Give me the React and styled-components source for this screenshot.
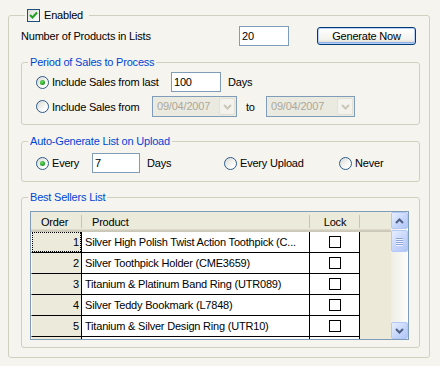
import React from 'react'
import styled, { createGlobalStyle } from 'styled-components'

const GlobalStyle = createGlobalStyle`
  html, body {
    margin: 0;
    padding: 0;
    background: #f5f4ef;
  }
  body {
    font: 11px 'Liberation Sans', Arial, sans-serif;
    letter-spacing: -0.2px;
    color: #000;
  }
  * { box-sizing: border-box; }
`

const Page = styled.div`
  width: 440px;
  height: 366px;
  padding: 8px 10px 0 8px;
  overflow: hidden;
`

const Group = styled.fieldset`
  margin: ${p => p.$mt || 0}px 0 0;
  padding: 0;
  border: 1px solid #d0d0bf;
  border-radius: 3px;
  min-width: 0;
`

const Legend = styled.legend`
  margin-left: ${p => p.$indent}px;
  padding: 0 ${p => p.$pr || 2}px 0 2px;
  height: 14px;
  line-height: 14px;
  color: ${p => (p.$plain ? '#000' : '#0046d5')};
`

const LegendInner = styled.span`
  display: inline-flex;
  align-items: center;
  gap: 4px;
  height: 14px;
`

const Body = styled.div`
  padding: ${p => p.$pad};
`

const Row = styled.div`
  display: flex;
  align-items: center;
  height: ${p => p.$h || 20}px;
  margin-top: ${p => p.$mt || 0}px;
`

const Text = styled.span`
  flex: none;
  width: ${p => (p.$w ? `${p.$w}px` : 'auto')};
  margin-left: ${p => p.$ml || 0}px;
  white-space: nowrap;
`

const TextInput = styled.input`
  flex: none;
  width: ${p => p.$w}px;
  height: 20px;
  margin: 0;
  border: 1px solid #7f9db9;
  background: #fff;
  padding: 0 2px;
  font: inherit;
  letter-spacing: inherit;
  color: #000;
  outline: none;
`

const Button = styled.button`
  flex: none;
  margin-left: ${p => p.$ml || 0}px;
  width: 99px;
  height: 18px;
  padding: 0;
  border: 1px solid #003c74;
  border-radius: 3px;
  background: linear-gradient(#ffffff, #f4f3ee 70%, #dcd8cc);
  box-shadow: inset 0 0 0 1px #b9d1f8, inset 0 -1px 0 1px #8caee8;
  font: inherit;
  letter-spacing: inherit;
  color: #000;
`

const Check = styled.span`
  flex: none;
  width: 13px;
  height: 13px;
  border: 1px solid #1c5180;
  background: linear-gradient(135deg, #dcdcd7, #ffffff);
  display: flex;
  align-items: center;
  justify-content: center;
`

const Option = styled.label`
  flex: none;
  display: flex;
  align-items: center;
  gap: 3px;
  width: ${p => (p.$w ? `${p.$w}px` : 'auto')};
  white-space: nowrap;
`

const Radio = styled.span`
  flex: none;
  position: relative;
  width: 13px;
  height: 13px;
  border-radius: 50%;
  border: 1px solid #2c5b8c;
  background: linear-gradient(135deg, #d8d8d2, #ffffff 75%);

  &::after {
    content: '';
    display: ${p => (p.$on ? 'block' : 'none')};
    position: absolute;
    left: 3px;
    top: 3px;
    width: 5px;
    height: 5px;
    border-radius: 50%;
    background: radial-gradient(circle at 40% 35%, #6ee26a, #2aa82a 55%, #1a7f1a);
  }
`

const Combo = styled.div`
  flex: none;
  display: flex;
  width: ${p => p.$w}px;
  height: 21px;
  border: 1px solid #7f9db9;
  background: #ebeae0;
  color: #aca899;
  padding: 1px;
`

const ComboText = styled.span`
  flex: 1;
  padding-left: 3px;
  line-height: 17px;
`

const ComboButton = styled.span`
  flex: none;
  width: 16px;
  border: 1px solid #e3e1d6;
  border-radius: 2px;
  background: #f3f2ed;
  display: flex;
  align-items: center;
  justify-content: center;
`

const GridBox = styled.div`
  display: flex;
  height: 129px;
  border: 1px solid #7f9db9;
  background: #ece9d8;
`

const Table = styled.div`
  flex: 1;
  display: grid;
  grid-template-columns: 51px 228px 50px 1fr;
  grid-template-rows: 20px repeat(6, 21px);
  overflow: hidden;
`

const HeadCell = styled.div`
  position: relative;
  display: flex;
  align-items: center;
  justify-content: ${p => (p.$center ? 'center' : 'flex-start')};
  padding-left: ${p => p.$pl || 0}px;
  background: linear-gradient(#ebeadb 0, #ebeadb 17px, #e2decd 17px, #d6d2c2 18px, #cbc7b8 19px);

  &::after {
    content: '';
    display: ${p => (p.$sep ? 'block' : 'none')};
    position: absolute;
    right: 0;
    top: 3px;
    width: 1px;
    height: 13px;
    background: #c7c5b2;
    box-shadow: 1px 0 0 #fff;
  }
`

const RowHead = styled.div`
  position: relative;
  background: #ebeadb;
  border-right: 1px solid #000;
  border-bottom: 1px solid #000;
  border-left: 1px solid #fff;
  text-align: right;
  padding-right: 2px;
  line-height: 20px;

  &::before {
    content: '';
    display: ${p => (p.$focus ? 'block' : 'none')};
    position: absolute;
    inset: 0 0 0 0;
    border: 1px dotted #000;
  }
`

const Cell = styled.div`
  background: #fff;
  border-right: 1px solid #000;
  border-bottom: 1px solid #000;
  padding-left: 3px;
  line-height: 20px;
  white-space: nowrap;
  overflow: hidden;
  display: flex;
  align-items: center;
  justify-content: ${p => (p.$center ? 'center' : 'flex-start')};
`

const Filler = styled.div`
  background: #ece9d8;
`

const LockBox = styled.span`
  width: 12px;
  height: 12px;
  margin-left: -3px;
  border: 1px solid #000;
  background: #fff;
`

const ScrollBar = styled.div`
  flex: none;
  width: 17px;
  display: flex;
  flex-direction: column;
  background: linear-gradient(to right, #eeede5, #fdfdfb);
`

const ScrollBtn = styled.div`
  flex: none;
  height: ${p => p.$h || 17}px;
  margin-top: ${p => p.$mt || 0}px;
  border: 1px solid #b4c8f6;
  border-radius: 2px;
  background: linear-gradient(135deg, #e7eefe, #c3d3fb 60%, #b1c6f7);
  display: flex;
  flex-direction: column;
  align-items: center;
  justify-content: center;
  gap: 1px;
`

const Grip = styled.span`
  width: 7px;
  height: 1px;
  background: #8ca3e0;
  box-shadow: 0 1px 0 #eef3fe;
`

const Track = styled.div`
  flex: 1;
`

const Chevron = ({ up, color = '#4d6185', w = 9 }) => (
  <svg width={w} height="6" viewBox="0 0 9 6">
    <path
      d={up ? 'M1 5 L4.5 1.5 L8 5' : 'M1 1 L4.5 4.5 L8 1'}
      fill="none"
      stroke={color}
      strokeWidth="2"
    />
  </svg>
)

// the sixth row only peeks in under the fifth, so its text stays out of view
const products = [
  ['1', 'Silver High Polish Twist Action Toothpick (C...'],
  ['2', 'Silver Toothpick Holder (CME3659)'],
  ['3', 'Titanium & Platinum Band Ring (UTR089)'],
  ['4', 'Silver Teddy Bookmark (L7848)'],
  ['5', 'Titanium & Silver Design Ring (UTR10)'],
  ['', '']
]

export default function App () {
  return (
    <Page>
      <GlobalStyle />
      <Group>
        <Legend $indent={16} $pr={6} $plain>
          <LegendInner>
            <Check>
              <svg width="9" height="9" viewBox="0 0 9 9">
                <path d="M1 4 L3.5 6.5 L8 1.5" fill="none" stroke="#21a121" strokeWidth="2" />
              </svg>
            </Check>
            Enabled
          </LegendInner>
        </Legend>
        <Body $pad="4px 9px 9px 12px">
          <Row>
            <Text $w={218}>Number of Products in Lists</Text>
            <TextInput $w={50} defaultValue="20" />
            <Button $ml={28}>Generate Now</Button>
          </Row>

          <Group $mt={9}>
            <Legend $indent={6}>Period of Sales to Process</Legend>
            <Body $pad="3px 0 7px 14px">
              <Row>
                <Option $w={135}><Radio $on />Include Sales from last</Option>
                <TextInput $w={50} defaultValue="100" />
                <Text $ml={7}>Days</Text>
              </Row>
              <Row $h={21} $mt={4}>
                <Option $w={116}><Radio />Include Sales from</Option>
                <Combo $w={85}>
                  <ComboText>09/04/2007</ComboText>
                  <ComboButton><Chevron color="#c9c7ba" w={9} /></ComboButton>
                </Combo>
                <Text $ml={9} $w={20}>to</Text>
                <Combo $w={89}>
                  <ComboText>09/04/2007</ComboText>
                  <ComboButton><Chevron color="#c9c7ba" w={9} /></ComboButton>
                </Combo>
              </Row>
            </Body>
          </Group>

          <Group $mt={9}>
            <Legend $indent={6}>Auto-Generate List on Upload</Legend>
            <Body $pad="5px 0 8px 14px">
              <Row>
                <Option $w={56}><Radio $on />Every</Option>
                <TextInput $w={48} defaultValue="7" />
                <Text $ml={7} $w={77}>Days</Text>
                <Option $w={115}><Radio />Every Upload</Option>
                <Option><Radio />Never</Option>
              </Row>
            </Body>
          </Group>

          <Group $mt={8}>
            <Legend $indent={6}>Best Sellers List</Legend>
            <Body $pad="7px 10px 7px 8px">
              <GridBox>
                <Table>
                  <HeadCell $pl={10} $sep>Order</HeadCell>
                  <HeadCell $pl={10} $sep>Product</HeadCell>
                  <HeadCell $center $sep>Lock</HeadCell>
                  <HeadCell />
                  {products.map(([n, name], i) => (
                    <React.Fragment key={i}>
                      <RowHead $focus={i === 0}>{n}</RowHead>
                      <Cell>{name}</Cell>
                      <Cell $center><LockBox /></Cell>
                      <Filler />
                    </React.Fragment>
                  ))}
                </Table>
                <ScrollBar>
                  <ScrollBtn><Chevron up /></ScrollBtn>
                  <ScrollBtn $h={22} $mt={1}>
                    <Grip /><Grip /><Grip /><Grip />
                  </ScrollBtn>
                  <Track />
                  <ScrollBtn><Chevron /></ScrollBtn>
                </ScrollBar>
              </GridBox>
            </Body>
          </Group>
        </Body>
      </Group>
    </Page>
  )
}
